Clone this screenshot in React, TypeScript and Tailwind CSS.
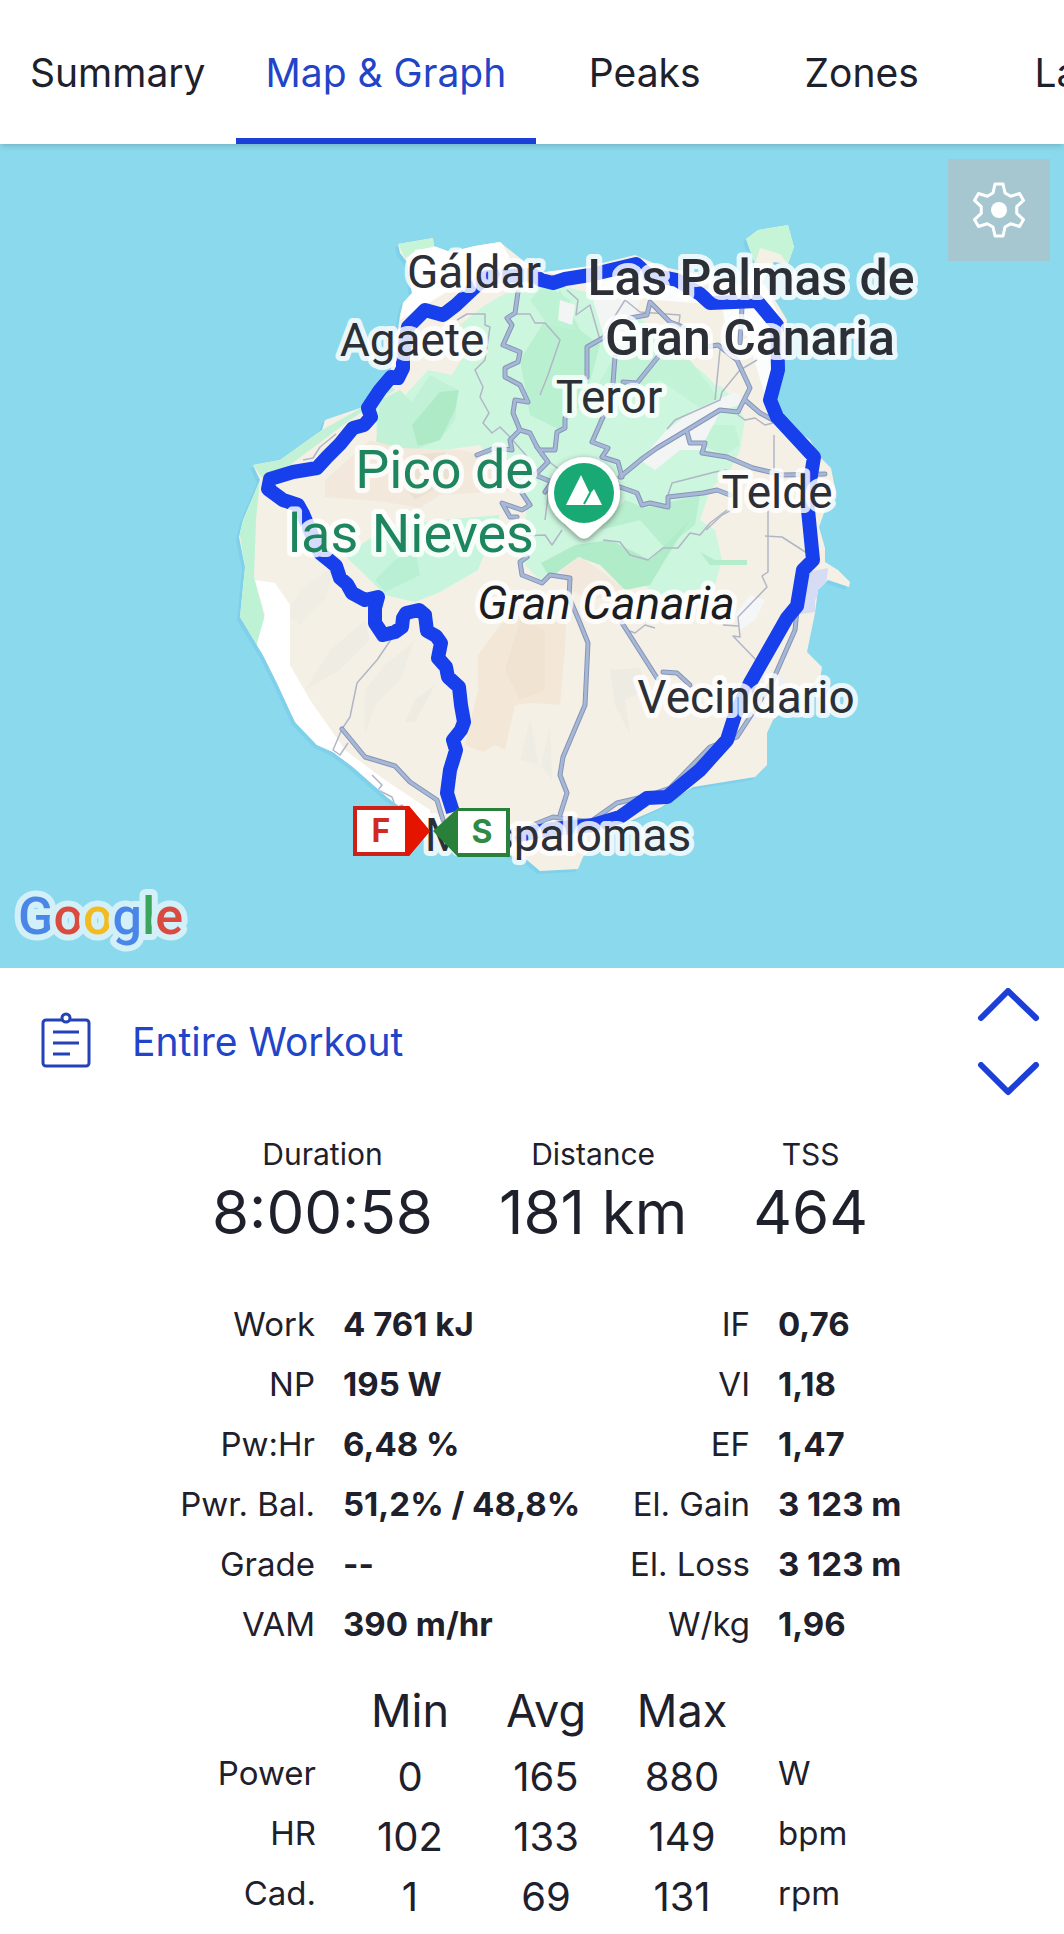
import React from "react";

const COAST =
  "398,244 433,238 434,246 450,252 475,246 500,242 506,247 525,262 545,272 590,266 635,255 660,266 700,275 742,285 755,264 746,239 758,230 788,225 794,247 788,264 774,262 762,282 775,300 787,320 784,350 782,377 775,397 781,410 786,423 810,440 820,457 831,468 836,493 824,513 819,527 825,548 825,562 838,570 850,582 849,587 828,580 818,590 815,613 807,652 822,667 820,680 773,720 767,733 767,765 755,777 693,787 660,808 605,832 583,857 578,869 540,871 527,860 490,850 430,832 407,812 387,797 353,767 333,752 317,745 295,722 277,683 263,655 240,617 245,567 239,537 243,520 260,480 253,465 280,460 322,430 325,420 363,407 370,393 390,373 396,345 400,315 403,303 412,293 407,262 400,253";

const ROUTE =
  "453,812 447,793 450,770 454,757 456,750 453,740 461,730 464,722 461,705 459,687 448,677 446,667 438,658 441,643 436,636 427,631 425,615 419,610 406,613 403,618 402,627 395,632 383,635 375,623 375,608 378,597 365,600 352,593 347,584 340,578 336,566 330,561 320,553 311,533 303,514 298,505 283,500 268,489 270,479 293,472 317,468 327,457 340,444 353,428 364,425 371,417 368,408 380,390 391,377 398,378 403,368 403,355 408,327 425,310 443,315 456,305 474,288 487,277 533,275 541,280 553,283 565,279 590,275 636,264 647,274 677,280 700,294 710,303 757,301 777,325 778,370 770,400 777,417 814,457 807,500 813,560 803,570 797,606 787,618 750,683 735,715 727,740 700,770 667,797 647,798 620,817 593,825 553,829 500,838 455,834";

const patches: { fill: string; points: string }[] = [
  { fill: "#cdf6df", points: "485,305 520,285 560,285 600,296 640,318 680,355 720,385 735,400 745,420 740,450 730,470 710,490 700,520 715,530 722,560 715,585 660,600 640,580 600,560 570,560 540,580 520,560 528,500 495,470 480,445 430,452 378,445 374,405 396,405 428,370 452,375 470,345 460,325" },
  { fill: "#c1f1d6", points: "380,400 400,390 412,402 430,375 458,390 455,420 440,440 415,450 376,443" },
  { fill: "#aeeac6", points: "440,392 459,390 455,410 440,440 418,446 412,425" },
  { fill: "#b9f0d0", points: "520,360 545,320 560,290 580,330 600,345 585,400 560,430 530,415" },
  { fill: "#bdf2d4", points: "545,285 570,300 575,330 548,325 530,300" },
  { fill: "#c2f3d6", points: "620,345 690,360 720,400 700,408 660,380 630,390 600,425 590,400" },
  { fill: "#c2f3d7", points: "700,425 735,425 740,445 725,455 690,440" },
  { fill: "#b8efcf", points: "625,500 645,508 700,495 695,525 665,548 640,520 600,530" },
  { fill: "#b1ecc9", points: "541,563 575,545 610,540 650,560 690,520 665,560 650,585 625,590 600,565 578,557 550,578" },
  { fill: "#b4edcc", points: "700,552 715,560 747,560 747,565 710,565" },
  { fill: "#c7f4dc", points: "345,556 385,528 440,520 500,515 478,570 440,592 415,602 385,595 362,572" },
  { fill: "#b9efd2", points: "395,560 415,550 420,575 385,592 375,580" },
  { fill: "#c2f1d5", points: "253,465 280,460 322,430 363,407 385,380 395,390 350,420 290,465 262,478" },
  { fill: "#bdf2d4", points: "239,530 260,480 256,520 254,577 264,615 264,657 238,617 245,567" },
  { fill: "#c6f4d7", points: "398,244 433,238 434,246 415,252 405,258" },
  { fill: "#c6f4d7", points: "746,239 758,230 788,225 794,247 788,264 780,254 760,248 755,264" },
  { fill: "#f2e9dc", points: "325,480 370,440 400,448 460,450 510,460 520,490 440,495 420,508 385,502 325,497" },
  { fill: "#ebe1d3", points: "410,455 445,452 450,480 415,500 395,475" },
  { fill: "#f3e8d8", points: "500,625 478,655 478,690 465,745 483,752 495,745 505,750 515,705 530,703 560,705 565,650 566,625 550,600 520,610" },
  { fill: "#f0e3d1", points: "520,620 545,630 545,690 520,700 505,670" },
  { fill: "#f3e8dc", points: "560,570 580,557 600,570 628,592 590,600 570,590" },
  { fill: "#efede4", points: "300,590 335,565 325,600 300,625 285,615" },
  { fill: "#efede3", points: "330,650 365,620 370,640 340,670 305,690" },
  { fill: "#efede3", points: "365,690 385,665 415,640 400,680 375,705 365,735" },
  { fill: "#eeebe2", points: "415,700 435,685 415,722 405,722" },
  { fill: "#eeebe2", points: "610,670 640,668 645,690 625,700 630,735 615,705" },
  { fill: "#efece3", points: "520,760 530,720 540,770 550,725 552,780 540,765" },
  { fill: "#ffffff", points: "255,580 275,583 290,605 290,665 310,700 345,750 385,780 430,810 430,840 380,800 310,748 255,650 265,615" },
  { fill: "#ffffff", points: "403,303 415,250 450,245 500,240 512,262 500,285 450,290 400,320" },
  { fill: "#fbfcfc", points: "545,272 640,260 700,290 765,285 785,330 775,360 765,395 745,330 700,310 650,300 590,280" },
  { fill: "#f3f5f5", points: "665,432 690,412 735,392 745,402 720,412 700,450 680,450 655,470 640,460" },
  { fill: "#f3f5f5", points: "560,300 575,305 572,325 558,320" },
  { fill: "#f3f5f5", points: "590,290 640,300 625,345 605,340" },
  { fill: "#f5f0e6", points: "655,300 722,305 735,390 715,385 683,350" },
  { fill: "#f4f6f8", points: "750,595 765,600 755,620 740,630 735,615" },
  { fill: "#d5dcf4", points: "808,572 828,568 826,585 815,600 815,612 800,614" },
  { fill: "#eef0f6", points: "765,690 785,675 780,700 755,720 745,715" },
];

const roads: string[] = [
  "518,292 515,313 507,318 512,325 503,345 520,352 518,362 505,368 505,377 520,385 528,402 515,400 513,413 520,430 530,433 537,447",
  "520,430 510,440 512,450 495,448 477,455",
  "540,450 555,450 557,432 565,428 565,418",
  "537,447 548,462 535,475 552,482 545,492",
  "522,493 530,505 522,510 502,503 510,517 517,517",
  "603,417 592,442 608,448 602,457 618,462 622,477",
  "620,477 643,458 657,448 687,430 720,410 738,412 750,388 737,360 718,345 706,347",
  "745,400 760,413 773,420",
  "687,432 690,443 705,443 702,453 727,457 753,468 783,475 825,474",
  "620,487 637,493 642,505 650,503 668,507 668,497 703,493 717,490 730,495",
  "587,377 587,347 603,338",
  "613,383 615,357",
  "658,357 637,383 623,382",
  "630,318 647,315 650,302 670,322 683,327",
  "742,307 740,343",
  "527,557 520,562 522,575 542,583 550,575 570,578 569,597 580,623 588,643 585,705 563,757 560,775 567,793 560,815",
  "622,623 657,678",
  "663,672 677,673 690,685",
  "797,610 795,630 773,680 750,717 737,737 710,747 670,788 647,796 617,803 590,822 553,817 533,825",
  "342,729 365,757 395,766 410,782 437,800 443,820",
];

const lanes: string[] = [
  "392,638 377,660 357,683 350,717 342,729 333,750 340,755 348,743",
  "457,320 467,314 485,314 485,325 490,327 485,360 475,370 483,387 480,397 489,413 483,423 492,433 500,427 510,437 530,460",
  "516,314 530,314 535,323 545,323",
  "372,775 382,785 378,790 392,797 396,808 402,805 410,812",
  "303,460 313,458 320,447 336,434",
  "545,323 560,340 548,375 540,395",
  "567,290 578,300 576,315 590,305 600,340 625,300 640,312 680,315 678,330",
  "715,400 720,350",
  "667,429 675,420 720,400 722,392 740,370 757,360",
  "738,415 745,420 755,418 765,425 773,423",
  "774,435 774,480",
  "668,495 672,483 715,472 727,470",
  "706,530 722,515 735,508",
  "768,510 768,572 762,576 767,587 738,617 740,637 733,636 758,662",
  "765,536 782,537 807,553",
  "723,625 738,626",
  "603,540 620,542 630,555 648,560 663,548 678,548 690,533 700,535 710,523 727,510",
  "520,536 545,535 552,545 562,530",
  "540,455 560,470 550,480 545,520",
  "500,470 520,480 530,470 548,482",
  "627,630 635,633 645,625 655,628",
];

const gearPoints = [0, 60, 120, 180, 240, 300]
  .flatMap((deg) =>
    [[-6, -17], [-4, -26], [4, -26], [6, -17]].map(([x, y]) => {
      const a = (deg * Math.PI) / 180;
      return `${(x * Math.cos(a) - y * Math.sin(a)).toFixed(2)},${(x * Math.sin(a) + y * Math.cos(a)).toFixed(2)}`;
    }),
  )
  .join(" ");

function Label({ x, y, children, className, anchor = "middle" }: {
  x: number; y: number; children: React.ReactNode; className: string; anchor?: "middle" | "end" | "start";
}) {
  return (
    <text x={x} y={y} textAnchor={anchor} stroke="#ffffff" strokeOpacity={0.82} strokeWidth={10} strokeLinejoin="round" paintOrder="stroke" className={className}>
      {children}
    </text>
  );
}

const TOWN = "fill-[#2c2f36] text-[46px]";

function RouteMap() {
  return (
    <svg viewBox="0 144 1064 824" className="block w-full font-[Roboto,sans-serif]" role="img" aria-label="Workout route around Gran Canaria">
      <defs>
        <clipPath id="island"><polygon points={COAST} /></clipPath>
        <filter id="pin-shadow" x="-30%" y="-30%" width="160%" height="160%">
          <feDropShadow dx="0" dy="2" stdDeviation="3" floodOpacity="0.45" />
        </filter>
      </defs>
      <rect x="0" y="144" width="1064" height="824" fill="#8bd9ec" />
      <polygon points={COAST} fill="#7fd0ea" transform="translate(-3 3)" />
      <polygon points={COAST} fill="#f5f0e6" />
      <g clipPath="url(#island)">
        {patches.map((p) => <polygon key={p.points} points={p.points} fill={p.fill} />)}
        <g fill="none" stroke="#b1b6c6" strokeWidth="1.5" strokeLinejoin="round">
          {lanes.map((d) => <polyline key={d} points={d} />)}
        </g>
        <g fill="none" stroke="#8595b8" strokeWidth="5" strokeLinejoin="round" strokeLinecap="round">
          {roads.map((d) => <polyline key={d} points={d} />)}
        </g>
        <g fill="none" stroke="#a7b7d6" strokeWidth="3" strokeLinejoin="round" strokeLinecap="round">
          {roads.map((d) => <polyline key={d} points={d} />)}
        </g>
      </g>
      <polyline points={ROUTE} fill="none" stroke="#173fec" strokeWidth="14" strokeLinejoin="round" />

      <Label x={474} y={288} className={TOWN}>Gáldar</Label>
      <Label x={412} y={356} className={TOWN}>Agaete</Label>
      <Label x={751} y={295} className="fill-[#2c2f36] text-[50px] font-medium">Las Palmas de</Label>
      <Label x={750} y={355} className="fill-[#2c2f36] text-[50px] font-medium">Gran Canaria</Label>
      <Label x={609} y={413} className={TOWN}>Teror</Label>
      <Label x={777} y={508} className={TOWN}>Telde</Label>
      <Label x={534} y={488} anchor="end" className="fill-[#1e865f] text-[54px]">Pico de</Label>
      <Label x={534} y={552} anchor="end" className="fill-[#1e865f] text-[54px]">las Nieves</Label>
      <Label x={606} y={619} className="fill-[#1c1d20] text-[46px] italic">Gran Canaria</Label>
      <Label x={746} y={713} className={TOWN}>Vecindario</Label>
      <Label x={558} y={851} className={TOWN}>Maspalomas</Label>

      <g filter="url(#pin-shadow)">
        <path d="M584 457a36 36 0 0 1 36 36c0 15-8 24-17 31l-13 12q-6 5-12 0l-13-12c-9-7-17-16-17-31a36 36 0 0 1 36-36z" fill="#fff" />
      </g>
      <circle cx="584" cy="493" r="30" fill="#18a974" />
      <path d="M566 505 581 475 590 494 594 489 602 505z" fill="#fff" />
      <path d="M584 504 590 493" stroke="#18a974" strokeWidth="2" />

      <path d="M353 806h56l21 25-21 25h-56z" fill="#e51400" />
      <path d="M353 806h56v50h-56z" fill="#cf2017" />
      <path d="M406 806h3l21 25-21 25h-3z" fill="#e51400" />
      <rect x="357" y="810" width="48" height="42" fill="#fff" />
      <text x="381" y="842" textAnchor="middle" className="fill-[#d12a22] font-[Inter,sans-serif] text-[32px] font-bold">F</text>
      <path d="M510 808h-52l-25 23 25 26h52z" fill="#28803b" />
      <rect x="458" y="811" width="48" height="42" fill="#fff" />
      <text x="482" y="843" textAnchor="middle" className="fill-[#2f8a43] font-[Inter,sans-serif] text-[32px] font-bold">S</text>

      <text x="18" y="934" stroke="#d3f0f8" strokeWidth="12" strokeLinejoin="round" paintOrder="stroke" className="text-[52px] font-medium">
        <tspan fill="#4a86e8">G</tspan><tspan fill="#db4a3f">o</tspan><tspan fill="#f2bb22">o</tspan><tspan fill="#4a86e8">g</tspan><tspan fill="#3aa55b">l</tspan><tspan fill="#db4a3f">e</tspan>
      </text>
    </svg>
  );
}

const tabs = ["Summary", "Map & Graph", "Peaks", "Zones", "Laps"];

const totals = [
  ["Duration", "8:00:58"],
  ["Distance", "181 km"],
  ["TSS", "464"],
];

const details = [
  ["Work", "4 761 kJ"], ["IF", "0,76"],
  ["NP", "195 W"], ["VI", "1,18"],
  ["Pw:Hr", "6,48 %"], ["EF", "1,47"],
  ["Pwr. Bal.", "51,2% / 48,8%"], ["El. Gain", "3 123 m"],
  ["Grade", "--"], ["El. Loss", "3 123 m"],
  ["VAM", "390 m/hr"], ["W/kg", "1,96"],
];

const ranges = [
  ["Power", "0", "165", "880", "W"],
  ["HR", "102", "133", "149", "bpm"],
  ["Cad.", "1", "69", "131", "rpm"],
];

export default function App() {
  return (
    <div className="w-full overflow-hidden bg-white font-[Inter,sans-serif] text-[#1e202b]">
      <nav className="relative z-10 flex h-36 overflow-hidden bg-white shadow-md" role="tablist">
        {tabs.map((tab) => {
          const active = tab === "Map & Graph";
          return (
            <button
              key={tab}
              type="button"
              role="tab"
              aria-selected={active}
              className={
                active
                  ? "min-w-[217px] shrink-0 border-b-6 border-[#1c3fd8] px-[30px] pt-2 text-[39px] text-[#2244c8]"
                  : "min-w-[217px] shrink-0 border-b-6 border-transparent px-[30px] pt-2 text-[39px]"
              }
            >
              {tab}
            </button>
          );
        })}
      </nav>

      <section className="relative">
        <RouteMap />
        <button type="button" aria-label="Map settings" className="absolute top-[15px] right-[14px] flex size-[102px] items-center justify-center bg-[#a7c7d0]">
          <svg viewBox="-30 -30 60 60" className="size-[60px]">
            <polygon points={gearPoints} fill="none" stroke="#fff" strokeWidth="3" strokeLinejoin="round" />
            <circle r="8" fill="#fff" />
          </svg>
        </button>
      </section>

      <section className="flex h-36 items-center justify-between pr-6 pl-10">
        <button type="button" className="flex items-center gap-10 pt-1 text-[39px] text-[#2244c8]">
          <svg viewBox="0 0 52 60" className="h-[60px] w-[52px]" fill="none" stroke="#2442b8" strokeWidth="3">
            <rect x="3" y="8" width="46" height="46" rx="3" />
            <circle cx="26" cy="6" r="4" fill="#fff" />
            <path d="M13 20h26M13 31h26M13 42h17" />
          </svg>
          Entire Workout
        </button>
        <div className="flex flex-col gap-10 pt-1">
          <button type="button" aria-label="Previous selection">
            <svg viewBox="0 0 64 34" className="block h-[34px] w-16" fill="none" stroke="#1c3fd8" strokeWidth="6" strokeLinecap="round" strokeLinejoin="round">
              <path d="M5 30 32 3 60 30" />
            </svg>
          </button>
          <button type="button" aria-label="Next selection">
            <svg viewBox="0 0 64 34" className="block h-[34px] w-16" fill="none" stroke="#1c3fd8" strokeWidth="6" strokeLinecap="round" strokeLinejoin="round">
              <path d="M5 3 32 30 60 3" />
            </svg>
          </button>
        </div>
      </section>

      <dl className="flex justify-center gap-[66px] pt-6 pl-4">
        {totals.map(([name, value]) => (
          <div key={name} className="flex flex-col items-center">
            <dt className="text-[30px] leading-9">{name}</dt>
            <dd className="text-[60px] leading-[80px]">{value}</dd>
          </div>
        ))}
      </dl>

      <dl className="mt-[42px] grid grid-cols-[315fr_245fr_134fr_286fr] gap-x-7 text-[33px] leading-[60px] whitespace-nowrap">
        {details.map(([name, value]) => (
          <React.Fragment key={name}>
            <dt className="text-right">{name}</dt>
            <dd className="font-bold">{value}</dd>
          </React.Fragment>
        ))}
      </dl>

      <table className="mt-[21px] w-full table-fixed text-center">
        <colgroup>
          <col className="w-[342px]" />
          <col className="w-[136px]" />
          <col className="w-[136px]" />
          <col className="w-[136px]" />
          <col />
        </colgroup>
        <thead>
          <tr className="h-[72px] text-[45px]">
            <td />
            <th scope="col" className="font-normal">Min</th>
            <th scope="col" className="font-normal">Avg</th>
            <th scope="col" className="font-normal">Max</th>
            <td />
          </tr>
        </thead>
        <tbody>
          {ranges.map(([name, min, avg, max, unit]) => (
            <tr key={name} className="h-[60px] text-[40px] leading-[60px]">
              <th scope="row" className="pr-[26px] pb-2 text-right text-[33px] leading-[52px] font-normal">{name}</th>
              <td>{min}</td>
              <td>{avg}</td>
              <td>{max}</td>
              <td className="pb-2 pl-7 text-left text-[33px] leading-[52px]">{unit}</td>
            </tr>
          ))}
        </tbody>
      </table>
    </div>
  );
}
